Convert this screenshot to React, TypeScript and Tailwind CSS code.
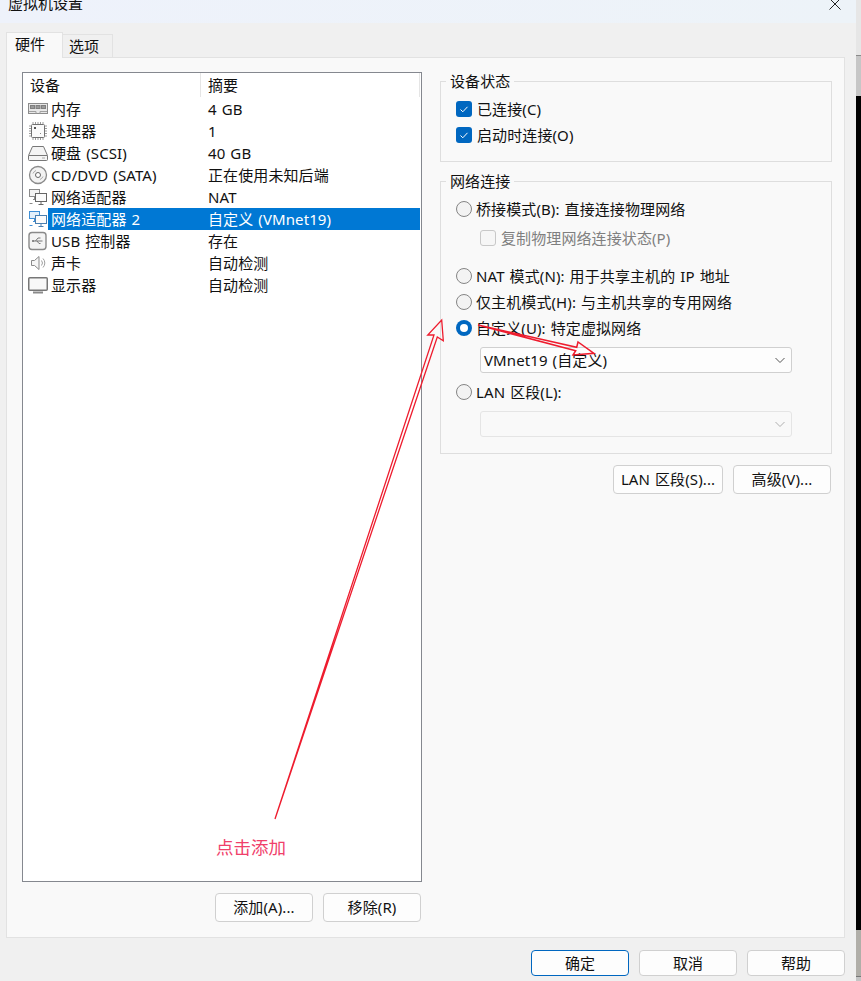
import type { ReactNode } from "react";

const FONT = { fontFamily: '"Noto Sans", "Noto Sans CJK SC", sans-serif' };

function IconMemory() {
  return (
    <svg width="20" height="20" viewBox="0 0 20 20" fill="none" stroke="#8c8c8c">
      <rect x="0.5" y="4.5" width="19" height="10" fill="#e8e8e8" />
      <rect x="2.5" y="6.5" width="4" height="3" fill="#9a9a9a" stroke="#808080" />
      <rect x="8" y="6.5" width="4" height="3" fill="#9a9a9a" stroke="#808080" />
      <rect x="13.5" y="6.5" width="4" height="3" fill="#9a9a9a" stroke="#808080" />
      <path d="M1 12.5h7v2M12 14.5v-2h7" stroke="#a0a0a0" />
    </svg>
  );
}

function IconCpu() {
  return (
    <svg width="20" height="20" viewBox="0 0 20 20" fill="none" stroke="#8c8c8c">
      <rect x="3.5" y="3.5" width="13" height="13" rx="1" fill="#fafafa" stroke="#707070" />
      <path d="M5 1v2M7.5 1v2M10 1v2M12.5 1v2M15 1v2M5 17v2M7.5 17v2M10 17v2M12.5 17v2M15 17v2M1 5h2M1 7.5h2M1 10h2M1 12.5h2M1 15h2M17 5h2M17 7.5h2M17 10h2M17 12.5h2M17 15h2" stroke="#9a9a9a" />
      <rect x="6" y="6" width="2" height="2" fill="#555" stroke="none" />
      <rect x="12" y="12" width="1" height="1" fill="#888" stroke="none" />
    </svg>
  );
}

function IconDisk() {
  return (
    <svg width="20" height="20" viewBox="0 0 20 20" fill="none" stroke="#777">
      <path d="M4.5 3.5h11l4 9v4a1 1 0 0 1-1 1h-17a1 1 0 0 1-1-1v-4z" fill="#f4f4f4" />
      <path d="M1 12.5h18" />
      <path d="M14 15h3" stroke="#aaa" />
    </svg>
  );
}

function IconCd() {
  return (
    <svg width="20" height="20" viewBox="0 0 20 20" fill="none" stroke="#8a8a8a">
      <circle cx="10" cy="10" r="8.5" fill="#f2f2f2" strokeWidth="1.3" />
      <circle cx="10" cy="10" r="2.5" fill="#fff" stroke="#666" />
      <path d="M5 8.5a5.5 5.5 0 0 1 3-3M15 11.5a5.5 5.5 0 0 1-3 3" stroke="#aaa" />
    </svg>
  );
}

function IconNetwork({ selected }: { selected?: boolean }) {
  const back = selected ? "#3f8fd6" : "#8a8a8a";
  return (
    <svg width="20" height="20" viewBox="0 0 20 20" fill="none" stroke={back}>
      <rect x="1.5" y="2.5" width="10" height="7" fill={selected ? "#e3f0fb" : "#f4f4f4"} />
      <path d="M5 12.5h3M6.5 9.5v3M1.5 16.5h3" />
      <rect x="7.5" y="6.5" width="11" height="8" fill="#fbfbfb" stroke={selected ? "#4a7fb0" : "#666"} />
      <path d="M13 14.5v3M10.5 17.5h5" stroke={selected ? "#4a7fb0" : "#666"} />
    </svg>
  );
}

function IconUsb() {
  return (
    <svg width="20" height="20" viewBox="0 0 20 20" fill="none" stroke="#8a8a8a">
      <rect x="1" y="1.5" width="17" height="17" rx="3" fill="#f4f4f4" strokeWidth="1.4" />
      <path d="M4.5 10h10M7.5 10l2.5-3h2.5M9 10l2 2.5h1.5" stroke="#777" />
      <circle cx="5" cy="10" r="1" fill="#777" stroke="none" />
    </svg>
  );
}

function IconSound() {
  return (
    <svg width="20" height="20" viewBox="0 0 20 20" fill="none" stroke="#8a8a8a">
      <path d="M3.5 7.5h3l4.5-4v13l-4.500-4h-3z" fill="#f6f6f6" />
      <path d="M13.500 7.500a4 4 0 0 1 0 5M15 5.500a6.500 6.500 0 0 1 0 9" stroke="#a0a0a0" />
    </svg>
  );
}

function IconDisplay() {
  return (
    <svg width="20" height="20" viewBox="0 0 20 20" fill="none" stroke="#777">
      <rect x="0.750" y="2.750" width="18.500" height="12.500" rx="1" fill="#f8f8f8" strokeWidth="1.500" />
      <path d="M5 17.500h10" stroke="#8a8a8a" strokeWidth="2" />
    </svg>
  );
}

const rows: { icon: ReactNode; name: string; value: string; selected?: boolean }[] = [
  { icon: <IconMemory />, name: "内存", value: "4 GB" },
  { icon: <IconCpu />, name: "处理器", value: "1" },
  { icon: <IconDisk />, name: "硬盘 (SCSI)", value: "40 GB" },
  { icon: <IconCd />, name: "CD/DVD (SATA)", value: "正在使用未知后端" },
  { icon: <IconNetwork />, name: "网络适配器", value: "NAT" },
  { icon: <IconNetwork selected />, name: "网络适配器 2", value: "自定义 (VMnet19)", selected: true },
  { icon: <IconUsb />, name: "USB 控制器", value: "存在" },
  { icon: <IconSound />, name: "声卡", value: "自动检测" },
  { icon: <IconDisplay />, name: "显示器", value: "自动检测" },
];

function DeviceRow({ icon, name, value, selected }: (typeof rows)[number]) {
  return (
    <div className="flex h-[22px] items-center pl-[5px] pr-px">
      <span className="flex w-[20px] shrink-0">{icon}</span>
      <div className={`flex h-full flex-1 items-center ${selected ? "bg-[#0078d4] text-white" : ""}`}>
        <span className="w-[160px] shrink-0 pl-[3px]">{name}</span>
        <span>{value}</span>
      </div>
    </div>
  );
}

function DlgButton({ children, className = "", primary }: { children: ReactNode; className?: string; primary?: boolean }) {
  return (
    <button
      type="button"
      className={`flex items-center justify-center rounded-[4px] border bg-[#fdfdfd] pb-px text-[15px] tracking-[0.1px] text-[#111111] [word-spacing:1px] ${primary ? "border-[#0067c0]" : "border-[#d0d0d0]"} ${className}`}
    >
      {children}
    </button>
  );
}

function Group({ title, className, children }: { title: string; className: string; children: ReactNode }) {
  return (
    <div className={`relative border border-[#dedede] ${className}`}>
      <span className="absolute left-[5px] top-[-10px] bg-[#f9f9f9] px-[4px] leading-[18px]">{title}</span>
      {children}
    </div>
  );
}

function Check({ label }: { label: string }) {
  return (
    <div className="flex h-[26px] items-center gap-[5px]">
      <span className="flex h-[16px] w-[16px] items-center justify-center rounded-[3px] bg-[#0067c0]">
        <svg width="10" height="10" viewBox="0 0 10 10" fill="none" stroke="#fff" strokeWidth="1">
          <path d="M1.500 5.500l2.300 2.300 4.700-5" />
        </svg>
      </span>
      <span>{label}</span>
    </div>
  );
}

function Radio({ label, checked }: { label: string; checked?: boolean }) {
  return (
    <div className="flex h-[26px] items-center gap-[4px]">
      {checked ? (
        <span className="flex h-[16px] w-[16px] items-center justify-center rounded-full bg-[#0067c0]">
          <span className="h-[8px] w-[8px] rounded-full bg-white" />
        </span>
      ) : (
        <span className="h-[16px] w-[16px] rounded-full border border-[#858585] bg-[#f3f3f3]" />
      )}
      <span>{label}</span>
    </div>
  );
}

function Combo({ value, disabled }: { value?: string; disabled?: boolean }) {
  return (
    <div
      className={`ml-[24px] flex h-[26px] w-[312px] items-center justify-between rounded-[3px] border pl-[3px] pr-[5px] ${
        disabled ? "border-[#e5e5e5] bg-[#f9f9f9]" : "border-[#d0d0d0] bg-[#fdfdfd]"
      }`}
    >
      <span>{value}</span>
      <svg width="12" height="12" viewBox="0 0 12 12" fill="none" stroke={disabled ? "#b0b0b0" : "#555"}>
        <path d="M1.500 4l4.500 4.500L10.500 4" />
      </svg>
    </div>
  );
}

export default function App() {
  return (
    <div
      className="relative flex h-[981px] w-[861px] overflow-hidden bg-[#f0f0f0] text-[15px] leading-[20px] tracking-[0.1px] text-[#111111] [word-spacing:1px]"
      style={FONT}
    >
      <div className="flex w-[856px] shrink-0 flex-col">
        <div className="flex h-[23px] shrink-0 justify-between overflow-hidden bg-gradient-to-r from-[#eef2fb] to-[#edf3f8] pl-[8px] pr-[15px]">
          <span className="mt-[-7px] text-[15px] tracking-normal">虚拟机设置</span>
          <svg className="mt-[-2px]" width="12" height="12" viewBox="0 0 12 12" fill="none" stroke="#222">
            <path d="M0.500 0.500l11 11M11.500 0.500l-11 11" />
          </svg>
        </div>

        <div className="mt-[8px] flex h-[26px] items-end pl-[6px]">
          <div className="relative z-10 mb-[-1px] flex h-[26px] w-[57px] items-center border border-b-0 border-[#e2e2e2] bg-[#f9f9f9] pb-[4px] pl-[8px]">硬件</div>
          <div className="flex h-[23px] w-[50px] items-center border border-b-0 border-l-0 border-[#e2e2e2] bg-[#f0f0f0] pl-[6px]">选项</div>
        </div>

        <div className="ml-[6px] flex h-[881px] w-[839px] gap-[18px] border border-[#e2e2e2] bg-[#f9f9f9] pl-[15px] pt-[14px]">
          <div className="flex w-[400px] flex-col">
            <div className="flex h-[810px] flex-col border border-[#85888f] bg-white">
              <div className="flex h-[24px] items-center">
                <span className="w-[177px] pl-[7px]">设备</span>
                <span className="h-full w-px bg-[#e5e5e5]" />
                <span className="w-[218px] pl-[7px]">摘要</span>
                <span className="h-full w-px bg-[#e5e5e5]" />
              </div>
              <div className="mt-px">
                {rows.map((r) => (
                  <DeviceRow key={r.name} {...r} />
                ))}
              </div>
            </div>
            <div className="mt-[11px] flex justify-end gap-[10px] pr-px">
              <DlgButton className="h-[29px] w-[98px]">添加(A)...</DlgButton>
              <DlgButton className="h-[29px] w-[98px]">移除(R)</DlgButton>
            </div>
          </div>

          <div className="flex w-[392px] flex-col pt-[9px]">
            <Group title="设备状态" className="h-[81px] pl-[15px] pt-[14px]">
              <Check label="已连接(C)" />
              <Check label="启动时连接(O)" />
            </Group>

            <Group title="网络连接" className="mt-[19px] h-[273px] pl-[15px] pt-[14px]">
              <Radio label="桥接模式(B): 直接连接物理网络" />
              <div className="mt-[3px] flex h-[26px] items-center gap-[5px] pl-[24px] text-[#7f7f7f]">
                <span className="h-[16px] w-[16px] rounded-[3px] border border-[#c8c8c8] bg-[#f6f6f6]" />
                <span>复制物理网络连接状态(P)</span>
              </div>
              <div className="mt-[12px]">
                <Radio label="NAT 模式(N): 用于共享主机的 IP 地址" />
                <Radio label="仅主机模式(H): 与主机共享的专用网络" />
                <Radio label="自定义(U): 特定虚拟网络" checked />
              </div>
              <div className="mt-[6px]">
                <Combo value="VMnet19 (自定义)" />
              </div>
              <div className="mt-[6px]">
                <Radio label="LAN 区段(L):" />
              </div>
              <div className="mt-[6px]">
                <Combo disabled />
              </div>
            </Group>

            <div className="mt-[11px] flex justify-end gap-[10px] pr-px">
              <DlgButton className="h-[29px] w-[110px]">LAN 区段(S)...</DlgButton>
              <DlgButton className="h-[29px] w-[98px]">高级(V)...</DlgButton>
            </div>
          </div>
        </div>

        <div className="mt-[12px] flex justify-end gap-[10px] pr-[11px]">
          <DlgButton primary className="h-[26px] w-[98px]">确定</DlgButton>
          <DlgButton className="h-[26px] w-[98px]">取消</DlgButton>
          <DlgButton className="h-[26px] w-[98px]">帮助</DlgButton>
        </div>
      </div>

      <div className="flex w-[5px] flex-col">
        <div className="h-[55px] bg-[#e6e6e6]" />
        <div className="h-px bg-[#8a8a8a]" />
        <div className="h-[40px] bg-[#c6c6c6]" />
        <div className="flex-1 bg-black" />
        <div className="h-[46px] bg-[#b0aea8]" />
        <div className="h-px bg-[#777777]" />
        <div className="h-[4px] bg-[#c4c4c4]" />
      </div>

      {/* annotation drawn over the screenshot */}
      <svg className="pointer-events-none absolute left-0 top-0" width="861" height="981" fill="none" stroke="#ee1c2e" strokeWidth="1.300">
        <path d="M275 819L434 335L427.700 335L441.700 320L443.300 340.700L437.300 337Z" />
        <path d="M478 325L576.700 347.300L578 342L594 353.300L573 355L575.700 350.700Z" strokeWidth="1.500" />
      </svg>
      <span
        className="absolute left-[216px] top-[836px] text-[17.5px] leading-[22px] tracking-normal text-[#f0406a]"
        style={{ fontFamily: '"Noto Sans CJK SC", sans-serif' }}
      >
        点击添加
      </span>
    </div>
  );
}
